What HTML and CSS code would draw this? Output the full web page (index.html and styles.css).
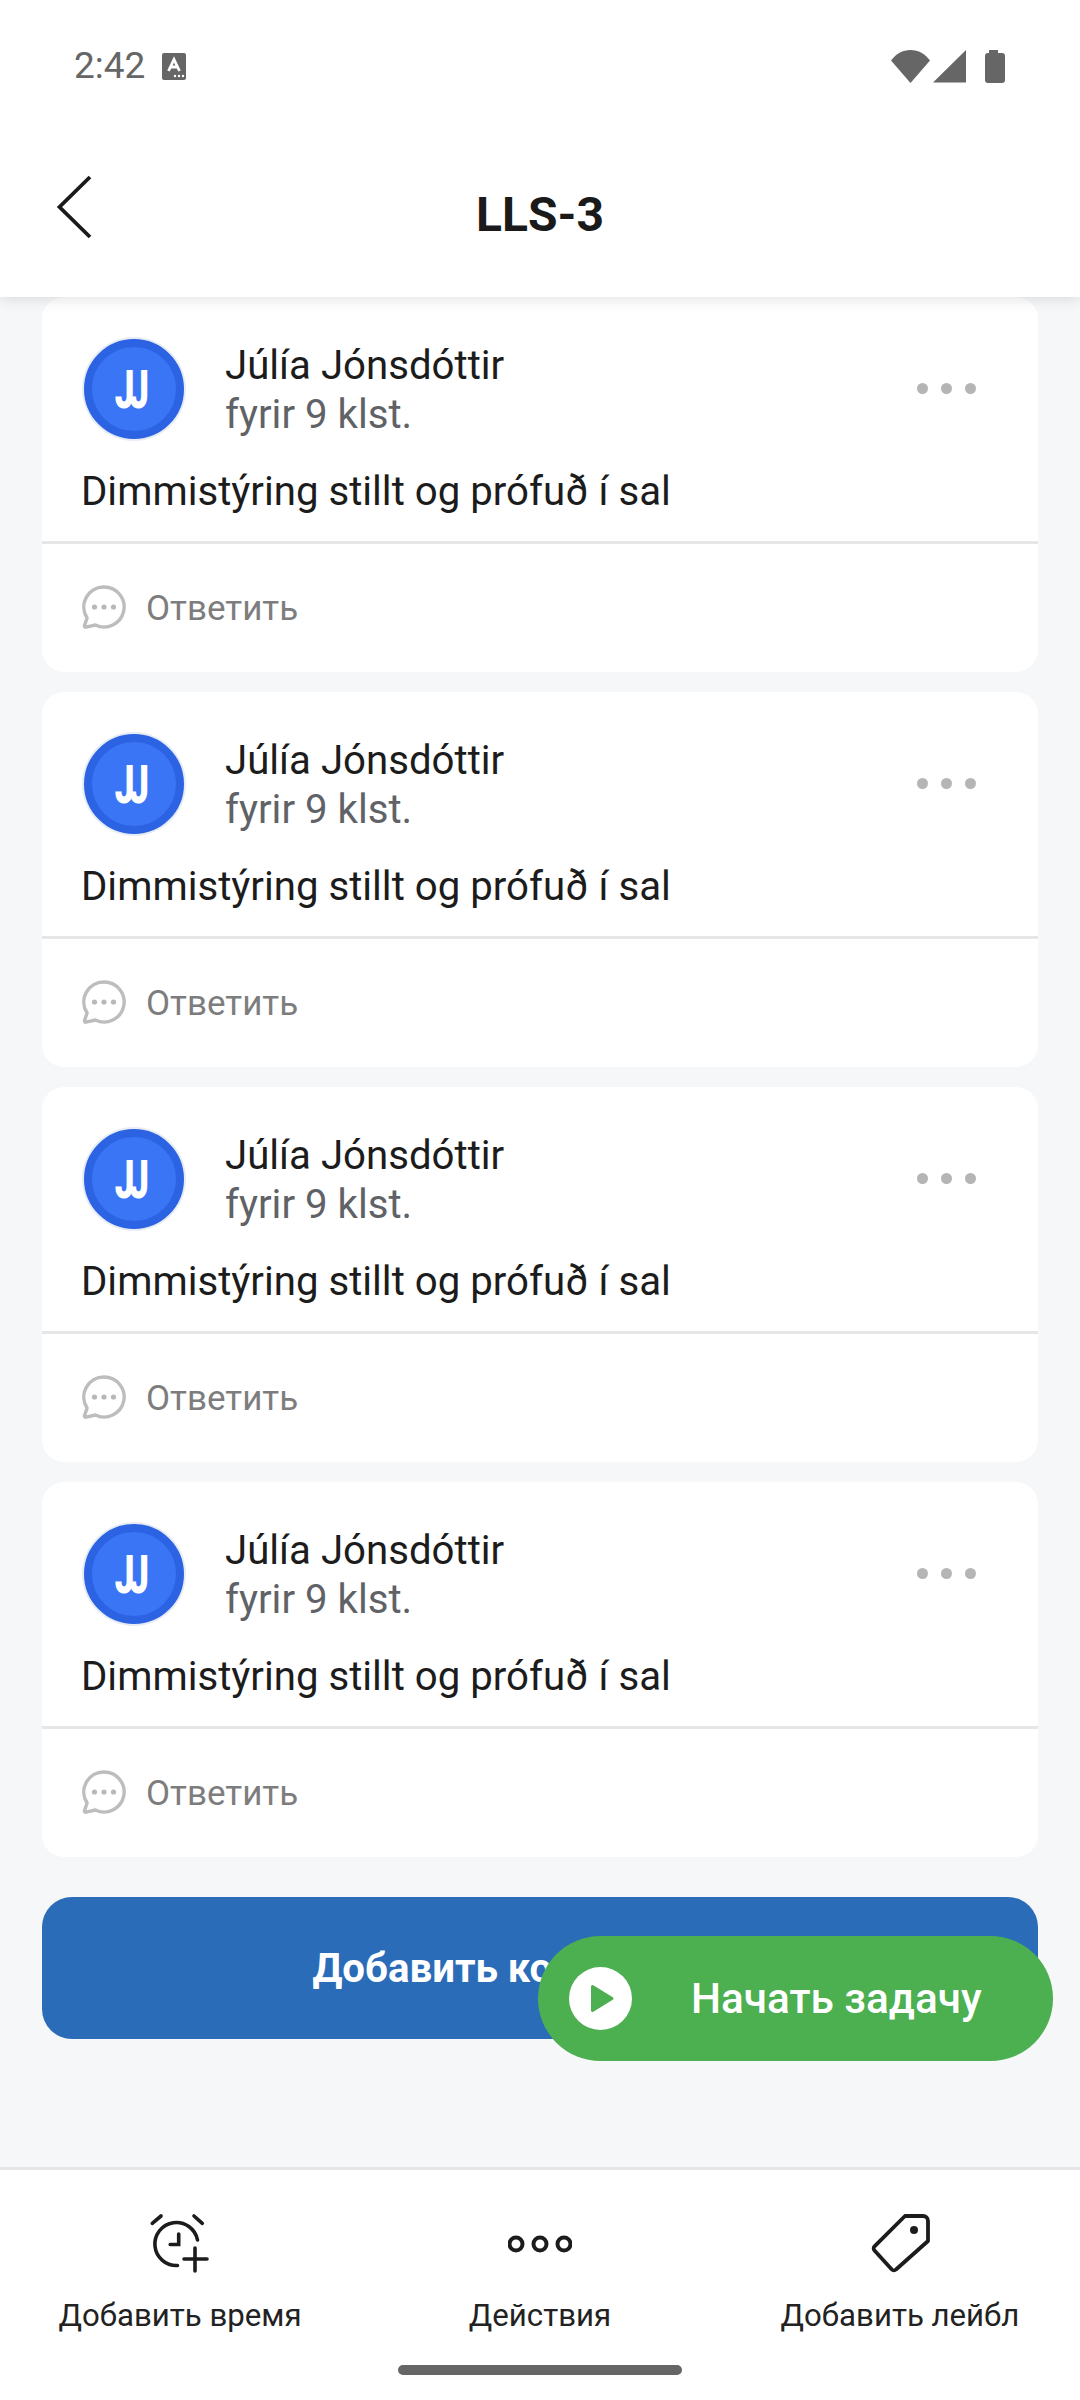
FILE: index.html
```html
<!DOCTYPE html>
<html>
<head>
<title>LLS-3</title>
<link rel="stylesheet" href="styles.css">
</head>
<body>
<svg class="defs" width="0" height="0">
  <symbol id="reply" viewBox="0 0 44 44">
    <path d="M22 2a20 20 0 1 1-8.600 38l-9.400 2.200c-1 .2-1.800-.7-1.500-1.600l2.600-7.600A20 20 0 0 1 22 2z" fill="none" stroke="#bdbdbd" stroke-width="3.400" stroke-linejoin="round"/>
    <circle cx="12.500" cy="22" r="2.600" fill="#b8b8b8"/>
    <circle cx="22" cy="22" r="2.600" fill="#b8b8b8"/>
    <circle cx="31.500" cy="22" r="2.600" fill="#b8b8b8"/>
  </symbol>
</svg>

<div class="page">
  <div class="top">
    <div class="status">
      <div class="status-left">
        <span class="time">2:42</span>
        <svg class="status-a" width="24" height="27" viewBox="0 0 24 27">
          <rect width="24" height="27" rx="2" fill="#666"/>
          <path d="M6.500 18 12 6.500 17.500 18M8.500 14h7" fill="none" stroke="#fff" stroke-width="2.800"/>
          <circle cx="13" cy="23" r="1.200" fill="#fff"/>
          <circle cx="17" cy="23" r="1.200" fill="#fff"/>
          <circle cx="21" cy="23" r="1.200" fill="#fff"/>
        </svg>
      </div>
      <svg class="status-right" width="116" height="34" viewBox="0 0 116 34">
        <path d="M1 11.500C6 5 12.500 1 20.500 1S35 5 40 11.500L20.500 34z" fill="#666"/>
        <path d="M43 33.500 76 1v32.500z" fill="#666"/>
        <path d="M99 1h9v3h4a3 3 0 0 1 3 3v24a3 3 0 0 1-3 3H98a3 3 0 0 1-3-3V7a3 3 0 0 1 3-3h1z" fill="#666"/>
      </svg>
    </div>
    <div class="nav">
      <svg class="back" width="36" height="64" viewBox="0 0 36 64">
        <path d="M34 2 3.500 32 34 62" fill="none" stroke="#1a1a1a" stroke-width="3.800"/>
      </svg>
      <h1 class="title">LLS-3</h1>
    </div>
  </div>

  <div class="content">
    <div class="card">
      <div class="head">
        <div class="avatar"><span>JJ</span></div>
        <div class="who">
          <div class="name">Júlía Jónsdóttir</div>
          <div class="ago">fyrir 9 klst.</div>
        </div>
        <div class="more"><i></i><i></i><i></i></div>
      </div>
      <div class="text">Dimmistýring stillt og prófuð í sal</div>
      <div class="reply"><svg class="reply-icon" width="44" height="44"><use href="#reply"/></svg><span>Ответить</span></div>
    </div>
    <div class="card">
      <div class="head">
        <div class="avatar"><span>JJ</span></div>
        <div class="who">
          <div class="name">Júlía Jónsdóttir</div>
          <div class="ago">fyrir 9 klst.</div>
        </div>
        <div class="more"><i></i><i></i><i></i></div>
      </div>
      <div class="text">Dimmistýring stillt og prófuð í sal</div>
      <div class="reply"><svg class="reply-icon" width="44" height="44"><use href="#reply"/></svg><span>Ответить</span></div>
    </div>
    <div class="card">
      <div class="head">
        <div class="avatar"><span>JJ</span></div>
        <div class="who">
          <div class="name">Júlía Jónsdóttir</div>
          <div class="ago">fyrir 9 klst.</div>
        </div>
        <div class="more"><i></i><i></i><i></i></div>
      </div>
      <div class="text">Dimmistýring stillt og prófuð í sal</div>
      <div class="reply"><svg class="reply-icon" width="44" height="44"><use href="#reply"/></svg><span>Ответить</span></div>
    </div>
    <div class="card">
      <div class="head">
        <div class="avatar"><span>JJ</span></div>
        <div class="who">
          <div class="name">Júlía Jónsdóttir</div>
          <div class="ago">fyrir 9 klst.</div>
        </div>
        <div class="more"><i></i><i></i><i></i></div>
      </div>
      <div class="text">Dimmistýring stillt og prófuð í sal</div>
      <div class="reply"><svg class="reply-icon" width="44" height="44"><use href="#reply"/></svg><span>Ответить</span></div>
    </div>

    <button class="add-btn">Добавить комментарий</button>
  </div>

  <div class="fab">
    <svg width="63" height="63" viewBox="0 0 63 63">
      <circle cx="31.500" cy="31.500" r="31.500" fill="#fff"/>
      <path d="M23.500 19.500 43 31.500 23.500 43.500z" fill="#4caf50" stroke="#4caf50" stroke-width="3" stroke-linejoin="round"/>
    </svg>
    <span>Начать задачу</span>
  </div>

  <div class="tabs">
    <div class="tab">
      <svg width="64" height="64" viewBox="0 0 64 64">
        <g fill="none" stroke="#1c1c1c" stroke-width="3.600" stroke-linecap="round">
          <path d="M4.300 11.300 13 4M46 4l8.300 7.300"/>
          <path d="M49.500 28A21.500 21.500 0 1 0 29.500 53.500"/>
          <path d="M30.700 22v10.500h-8.500"/>
          <path d="M36 47h23M47 36v23"/>
        </g>
      </svg>
      <span>Добавить время</span>
    </div>
    <div class="tab">
      <svg width="64" height="64" viewBox="0 0 64 64">
        <g fill="none" stroke="#1c1c1c" stroke-width="4">
          <circle cx="8" cy="32" r="6.500"/>
          <circle cx="32" cy="32" r="6.500"/>
          <circle cx="56" cy="32" r="6.500"/>
        </g>
      </svg>
      <span>Действия</span>
    </div>
    <div class="tab">
      <svg width="64" height="64" viewBox="0 0 64 64">
        <path d="M37 4h18a5 5 0 0 1 5 5v20L28 57.500a3 3 0 0 1-4.200 0L6.500 38.500a3 3 0 0 1 0-4.200z" fill="none" stroke="#1c1c1c" stroke-width="3.800" stroke-linejoin="round"/>
        <circle cx="46" cy="18" r="4" fill="#1c1c1c"/>
      </svg>
      <span>Добавить лейбл</span>
    </div>
    <div class="home-bar"></div>
  </div>
</div>
</body>
</html>
```

FILE: styles.css
```css
* {
  box-sizing: border-box;
}

body {
  margin: 0;
  font-family: Roboto, "Liberation Sans", sans-serif;
  background-color: #f6f7f9;
}

.defs {
  position: absolute;
}

.page {
  position: relative;
  display: flex;
  flex-direction: column;
  width: 1080px;
  height: 2400px;
  overflow: hidden;
}

.top {
  position: relative;
  z-index: 2;
  height: 297px;
  background-color: #fff;
  box-shadow: 0 2px 14px rgba(0, 0, 0, 0.12);
}

.status {
  display: flex;
  justify-content: space-between;
  align-items: center;
  height: 132px;
  padding: 0 74px 0 74px;
}

.status-left {
  display: flex;
  align-items: center;
  gap: 17px;
}

.time {
  font-size: 37px;
  line-height: 42px;
  color: #666;
}

.nav {
  position: relative;
  display: flex;
  justify-content: center;
  align-items: center;
  height: 165px;
}

.back {
  position: absolute;
  left: 56px;
  top: 43px;
}

.title {
  margin: 0;
  font-size: 48px;
  font-weight: 700;
  color: #1a1a1a;
}

.content {
  flex: 1;
  display: flex;
  flex-direction: column;
  gap: 20px;
  padding: 0 42px;
}

.card {
  height: 375px;
  background-color: #fff;
  border-radius: 22px;
}

.head {
  display: flex;
  align-items: center;
  padding: 42px 62px 0 42px;
}

.avatar {
  display: flex;
  justify-content: center;
  align-items: center;
  width: 100px;
  height: 100px;
  border: 8px solid #2b63e3;
  border-radius: 50%;
  background-color: #3a75f6;
  box-shadow: 0 0 0 2px #e6ebf5;
  color: #fff;
  font-size: 54px;
  font-weight: 900;
}

.avatar span {
  display: inline-block;
  transform: scaleX(0.65);
  letter-spacing: -8px;
  margin-left: -10px;
}

.who {
  flex: 1;
  margin-left: 41px;
}

.name {
  font-size: 40.2px;
  line-height: 51px;
  color: #1c1c1c;
}

.ago {
  font-size: 40.2px;
  line-height: 48px;
  color: #5f6266;
}

.more {
  display: flex;
  gap: 13px;
  margin-bottom: 2px;
}

.more i {
  width: 11px;
  height: 11px;
  border-radius: 50%;
  background-color: #b5b5b5;
}

.text {
  margin-top: 28px;
  padding: 0 39px;
  font-size: 40.2px;
  line-height: 50px;
  color: #1c1c1c;
}

.reply {
  display: flex;
  align-items: center;
  gap: 20px;
  height: 131px;
  margin-top: 24px;
  padding: 0 41px;
  border-top: 3px solid #e6e6e6;
  font-size: 35px;
  color: #7d7d7d;
}

.reply-icon {
  margin: 0 0 2px -1px;
}

.add-btn {
  flex: none;
  height: 142px;
  margin-top: 20px;
  border: none;
  border-radius: 30px;
  background-color: #2b6cb8;
  color: #fff;
  font-family: Roboto, sans-serif;
  font-size: 40.2px;
  font-weight: 700;
}

.fab {
  position: absolute;
  left: 538px;
  top: 1936px;
  display: flex;
  align-items: center;
  width: 515px;
  height: 125px;
  padding-left: 31px;
  border-radius: 63px;
  background-color: #4caf50;
  color: #fff;
  font-size: 42.3px;
  font-weight: 500;
}

.fab span {
  margin-left: 59px;
}

.tabs {
  position: relative;
  display: flex;
  height: 233px;
  border-top: 3px solid #e6e6e8;
  background-color: #fff;
}

.tab {
  display: flex;
  flex: 1;
  flex-direction: column;
  align-items: center;
  padding-top: 42px;
  font-size: 31.2px;
  color: #222;
}

.tab span {
  margin-top: 21px;
}

.home-bar {
  position: absolute;
  left: 398px;
  bottom: 25px;
  width: 284px;
  height: 10px;
  border-radius: 5px;
  background-color: #666;
}
```
